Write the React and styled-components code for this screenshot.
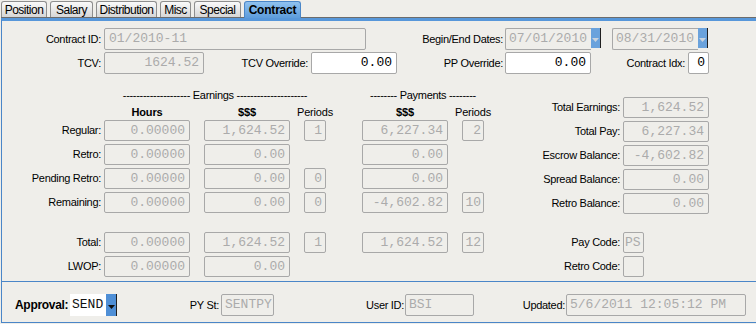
import React from 'react';
import styled, { createGlobalStyle } from 'styled-components';

const GlobalStyle = createGlobalStyle`
  html, body {
    margin: 0;
    padding: 0;
    background: #efeeea;
  }
  body {
    font-family: "Liberation Sans", Arial, sans-serif;
    font-size: 11px;
    color: #000;
  }
`;

// page + tabs
const Page = styled.div`
  width: 756px;
  height: 324px;
  padding-left: 1px;
  box-sizing: border-box;
  overflow: hidden;
  background: #efeeea;
`;

const TabStrip = styled.div`
  display: flex;
  align-items: flex-end;
  gap: 3px;
  height: 16px;
  padding-top: 1px;
  border-bottom: 1px solid #6c6c6c;
`;

const Tab = styled.div`
  width: ${p => p.$w}px;
  height: ${p => (p.$active ? 17 : 16)}px;
  margin-bottom: ${p => (p.$active ? -1 : 0)}px;
  box-sizing: border-box;
  display: flex;
  align-items: center;
  justify-content: center;
  border: 1px solid ${p => (p.$active ? '#4a86c8' : '#8e8e8e')};
  border-bottom: none;
  border-radius: 3px 3px 0 0;
  background: ${p => (p.$active
    ? 'linear-gradient(#8fc1ef, #5d9cdb)'
    : 'linear-gradient(#fafafa, #d6d6d6)')};
  font-size: 12px;
  font-weight: ${p => (p.$active ? 'bold' : 'normal')};
  letter-spacing: ${p => (p.$active ? -0.2 : -0.5)}px;
  position: relative;
  z-index: 1;
`;

const Panel = styled.div`
  border-top: 3px solid #5797da;
  border-left: 1px solid #4a86c8;
`;

// form bits
const TopSection = styled.div`
  display: flex;
  flex-direction: column;
  gap: 2px;
  padding-top: 7px;
`;

const Row = styled.div`
  display: flex;
  align-items: center;
  height: 22px;
`;

const Label = styled.label`
  flex: none;
  width: ${p => p.$w}px;
  padding-right: ${p => p.$pr ?? 3}px;
  box-sizing: border-box;
  text-align: ${p => (p.$left ? 'left' : 'right')};
  white-space: nowrap;
  letter-spacing: -0.3px;
  font-weight: ${p => (p.$bold ? 'bold' : 'normal')};
  font-size: ${p => (p.$bold ? 12 : 11)}px;
`;

const Field = styled.div`
  flex: none;
  width: ${p => p.$w}px;
  height: ${p => p.$h ?? 22}px;
  line-height: ${p => (p.$h ?? 22) - 2}px;
  box-sizing: border-box;
  padding: 0 ${p => p.$pad ?? 4}px;
  border: 1px solid #a8a8a8;
  border-radius: 2px;
  background: ${p => (p.$edit ? '#fff' : 'transparent')};
  color: ${p => (p.$edit ? '#000' : '#ababab')};
  font-family: "Liberation Mono", "Courier New", monospace;
  font-size: 13px;
  text-align: ${p => (p.$left ? 'left' : 'right')};
  white-space: nowrap;
  overflow: hidden;
`;

const Combo = styled.div`
  flex: none;
  display: flex;
  align-items: stretch;
  height: 22px;
  margin-left: ${p => p.$gap ?? 0}px;
`;

const ComboField = styled(Field)`
  border-right: none;
  border-radius: 2px 0 0 2px;
`;

const DropButton = styled.div`
  flex: none;
  width: ${p => p.$w ?? 10}px;
  margin: ${p => (p.$edit ? '0' : '0 0 2px')};
  box-sizing: border-box;
  display: flex;
  align-items: center;
  justify-content: center;
  padding-top: 3px;
  background: ${p => (p.$edit ? '#4f8fd6' : '#6aa2dc')};
  border-right: 1px solid #1f1f1f;
`;

function Arrow({ color }) {
  return (
    <svg width="7" height="4" viewBox="0 0 7 4">
      <path d="M0 0 H7 L3.5 4 Z" fill={color} />
    </svg>
  );
}

function DateCombo({ value, gap }) {
  return (
    <Combo $gap={gap}>
      <ComboField $w={86} $left $pad={3}>{value}</ComboField>
      <DropButton>
        <Arrow color="#c9d3de" />
      </DropButton>
    </Combo>
  );
}

// earnings / payments grid
const Middle = styled.div`
  display: flex;
  margin-top: 13px;
  margin-bottom: 4px;
`;

const LeftGrid = styled.div`
  display: grid;
  grid-template-columns: 102px 100px 100px 22px 36px 100px 22px;
  grid-template-rows: 16px 17px repeat(3, 24px) 40px 24px 21px;
  align-items: start;
`;

const GroupHead = styled.div`
  grid-column: ${p => p.$cols};
  height: 16px;
  display: flex;
  align-items: center;
  justify-content: center;
  white-space: nowrap;
  letter-spacing: -0.3px;
`;

const ColHead = styled.div`
  grid-column: ${p => p.$col};
  width: ${p => p.$w}px;
  height: 17px;
  display: flex;
  align-items: center;
  justify-content: center;
  white-space: nowrap;
  font-weight: ${p => (p.$bold ? 'bold' : 'normal')};
  letter-spacing: -0.2px;
`;

const GridLabel = styled(Label)`
  height: 21px;
  line-height: 21px;
`;

const Cell = styled(Field)`
  grid-row: ${p => p.$row};
  grid-column: ${p => p.$col};
`;

const RightGrid = styled.div`
  display: grid;
  grid-template-columns: 139px 86px;
  grid-template-rows: repeat(4, 24px) 39px 24px 21px;
  align-items: start;
  margin-top: 10px;
`;

// footer
const Footer = styled.div`
  display: flex;
  align-items: center;
  padding: 12px 0 6px 13px;
  border-top: 1px solid #4a86c8;
  border-bottom: 1px solid #4a86c8;
`;

const SelectValue = styled.div`
  width: 36px;
  height: 22px;
  line-height: 22px;
  padding-left: 2px;
  box-sizing: border-box;
  background: #fff;
  font-family: "Liberation Mono", "Courier New", monospace;
  font-size: 13px;
  color: #111;
`;

const tabs = [
  ['Position', 46], ['Salary', 43], ['Distribution', 61],
  ['Misc', 31], ['Special', 47], ['Contract', 57],
];

const earnRows = [
  { label: 'Regular:', hours: '0.00000', amt: '1,624.52', per: '1', pay: '6,227.34', payPer: '2' },
  { label: 'Retro:', hours: '0.00000', amt: '0.00', pay: '0.00' },
  { label: 'Pending Retro:', hours: '0.00000', amt: '0.00', per: '0', pay: '0.00' },
  { label: 'Remaining:', hours: '0.00000', amt: '0.00', per: '0', pay: '-4,602.82', payPer: '10' },
  { label: 'Total:', hours: '0.00000', amt: '1,624.52', per: '1', pay: '1,624.52', payPer: '12' },
  { label: 'LWOP:', hours: '0.00000', amt: '0.00' },
];

const balances = [
  ['Total Earnings:', '1,624.52'],
  ['Total Pay:', '6,227.34'],
  ['Escrow Balance:', '-4,602.82'],
  ['Spread Balance:', '0.00'],
  ['Retro Balance:', '0.00'],
];

export default function App() {
  return (
    <Page>
      <GlobalStyle />
      <TabStrip>
        {tabs.map(([name, w]) => (
          <Tab key={name} $w={w} $active={name === 'Contract'}>{name}</Tab>
        ))}
      </TabStrip>

      <Panel>
        <TopSection>
          <Row>
            <Label $w={102}>Contract ID:</Label>
            <Field $w={262} $left>01/2010-11</Field>
            <Label $w={139} $pr={2}>Begin/End Dates:</Label>
            <DateCombo value="07/01/2010" />
            <DateCombo value="08/31/2010" gap={11} />
          </Row>
          <Row>
            <Label $w={102}>TCV:</Label>
            <Field $w={100}>1624.52</Field>
            <Label $w={107}>TCV Override:</Label>
            <Field $w={86} $edit>0.00</Field>
            <Label $w={108} $pr={2}>PP Override:</Label>
            <Field $w={86} $edit>0.00</Field>
            <Label $w={97}>Contract Idx:</Label>
            <Field $w={21} $edit $pad={3}>0</Field>
          </Row>
        </TopSection>

        <Middle>
          <LeftGrid>
            <GroupHead $cols="2 / 5">-------------------- Earnings ---------------------</GroupHead>
            <GroupHead $cols="6 / 8">-------- Payments --------</GroupHead>

            <ColHead $col={2} $w={86} $bold>Hours</ColHead>
            <ColHead $col={3} $w={86} $bold>$$$</ColHead>
            <ColHead $col={4} $w={22}>Periods</ColHead>
            <ColHead $col={6} $w={86} $bold>$$$</ColHead>
            <ColHead $col={7} $w={22}>Periods</ColHead>

            {earnRows.map((r, i) => (
              <React.Fragment key={r.label}>
                <GridLabel $w={102} style={{ gridRow: i + 3 }}>{r.label}</GridLabel>
                <Cell $row={i + 3} $col={2} $w={86} $h={21}>{r.hours}</Cell>
                <Cell $row={i + 3} $col={3} $w={86} $h={21}>{r.amt}</Cell>
                {r.per !== undefined && (
                  <Cell $row={i + 3} $col={4} $w={22} $h={21} $pad={3}>{r.per}</Cell>
                )}
                {r.pay !== undefined && (
                  <Cell $row={i + 3} $col={6} $w={86} $h={21}>{r.pay}</Cell>
                )}
                {r.payPer !== undefined && (
                  <Cell $row={i + 3} $col={7} $w={22} $h={21} $pad={2}>{r.payPer}</Cell>
                )}
              </React.Fragment>
            ))}
          </LeftGrid>

          <RightGrid>
            {balances.map(([label, value]) => (
              <React.Fragment key={label}>
                <GridLabel $w={139}>{label}</GridLabel>
                <Field $w={86} $h={21}>{value}</Field>
              </React.Fragment>
            ))}
            <GridLabel $w={139} style={{ gridRow: 6 }}>Pay Code:</GridLabel>
            <Field $w={21} $h={21} $left $pad={1}>PS</Field>
            <GridLabel $w={139}>Retro Code:</GridLabel>
            <Field $w={21} $h={21} />
          </RightGrid>
        </Middle>

        <Footer>
          <Label $w={55} $bold $left $pr={0}>Approval:</Label>
          <Combo>
            <SelectValue>SEND</SelectValue>
            <DropButton $w={11} $edit>
              <Arrow color="#111" />
            </DropButton>
          </Combo>
          <Label $w={104} $pr={2}>PY St:</Label>
          <Field $w={53} $left $pad={3}>SENTPY</Field>
          <Label $w={131} $pr={1}>User ID:</Label>
          <Field $w={69} $left $pad={3}>BSI</Field>
          <Label $w={92} $pr={1}>Updated:</Label>
          <Field $w={180} $left $pad={3}>5/6/2011 12:05:12 PM</Field>
        </Footer>
      </Panel>
    </Page>
  );
}
